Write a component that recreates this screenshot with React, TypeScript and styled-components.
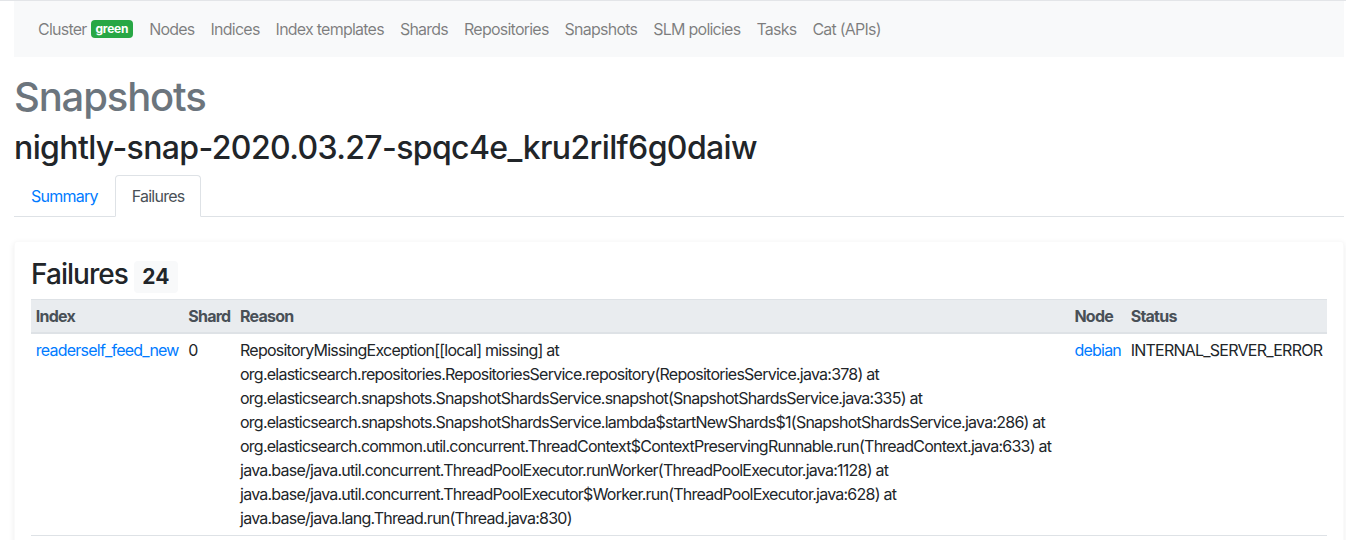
import React from "react";
import styled, { createGlobalStyle } from "styled-components";

const GlobalStyle = createGlobalStyle`
  html, body { margin: 0; padding: 0; background: #fff; }
  body {
    font-family: "Inter", "Liberation Sans", sans-serif;
    font-size: 16px;
    line-height: 1.5;
    color: #212529;
    letter-spacing: -0.76px;
  }
  * { box-sizing: border-box; }
`;

const Page = styled.div`
  border-top: 1px solid #e3e5e8;
  padding: 0 2px 0 14px;
`;

const Navbar = styled.nav`
  display: flex;
  align-items: center;
  background: #f8f9fa;
  padding: 8px 16px;
`;

const NavLink = styled.a`
  display: flex;
  align-items: center;
  padding: 8px;
  color: rgba(0, 0, 0, 0.5);
  text-decoration: none;
  line-height: 24px;
  white-space: nowrap;
`;

const Badge = styled.span<{ $variant: "success" | "light" }>`
  display: inline-block;
  margin-left: ${(p) => (p.$variant === "success" ? "4px" : "6px")};
  padding: 0.25em 0.4em;
  font-size: 75%;
  font-weight: 700;
  line-height: 1;
  letter-spacing: ${(p) => (p.$variant === "success" ? "-0.2px" : "0")};
  border-radius: 0.25rem;
  vertical-align: ${(p) => (p.$variant === "success" ? "baseline" : "middle")};
  color: ${(p) => (p.$variant === "success" ? "#fff" : "#212529")};
  background: ${(p) => (p.$variant === "success" ? "#28a745" : "#f8f9fa")};
`;

const Title = styled.h1`
  margin: 16px 0 8px;
  font-size: 40px;
  font-weight: 500;
  line-height: 1.2;
  letter-spacing: -1.15px;
  color: #6c757d;
`;

const Subtitle = styled.h2`
  margin: 0 0 8px;
  font-size: 32px;
  font-weight: 500;
  line-height: 1.2;
  letter-spacing: -0.62px;
  color: #212529;
`;

const Tabs = styled.ul`
  display: flex;
  list-style: none;
  margin: 0;
  padding: 0;
  border-bottom: 1px solid #dee2e6;
`;

const Tab = styled.a<{ $active?: boolean }>`
  display: block;
  margin-bottom: -1px;
  padding: 8px 16px;
  border-style: solid;
  border-width: 1px;
  border-color: ${(p) => (p.$active ? "#dee2e6 #dee2e6 #fff" : "transparent")};
  border-top-left-radius: 0.25rem;
  border-top-right-radius: 0.25rem;
  background: ${(p) => (p.$active ? "#fff" : "transparent")};
  color: ${(p) => (p.$active ? "#495057" : "#007bff")};
  text-decoration: none;
`;

const Card = styled.section`
  margin-top: 24px;
  padding: 16px;
  background: #fff;
  border-radius: 0.25rem;
  box-shadow: 0 0.125rem 0.4rem rgba(0, 0, 0, 0.08);
  border: 1px solid rgba(0, 0, 0, 0.02);
`;

const CardTitle = styled.h3`
  margin: 0 0 6px;
  font-size: 28px;
  font-weight: 500;
  line-height: 1.2;
  letter-spacing: -0.95px;
`;

const Table = styled.table`
  width: 100%;
  border-collapse: collapse;
`;

const Th = styled.th`
  padding: 4px 4.8px;
  text-align: left;
  vertical-align: bottom;
  font-weight: 700;
  color: #495057;
  background: #e9ecef;
  border-top: 1px solid #dee2e6;
  border-bottom: 2px solid #dee2e6;
  white-space: nowrap;
`;

const Td = styled.td<{ $wrap?: boolean }>`
  padding: 4.8px;
  vertical-align: top;
  border-top: 1px solid #dee2e6;
  border-bottom: 1px solid #dee2e6;
  white-space: ${(p) => (p.$wrap ? "normal" : "nowrap")};
`;

const Link = styled.a`
  color: #007bff;
  text-decoration: none;
`;

const navItems = [
  "Nodes",
  "Indices",
  "Index templates",
  "Shards",
  "Repositories",
  "Snapshots",
  "SLM policies",
  "Tasks",
  "Cat (APIs)",
];

const reason =
  "RepositoryMissingException[[local] missing] at " +
  "org.elasticsearch.repositories.RepositoriesService.repository(RepositoriesService.java:378) at " +
  "org.elasticsearch.snapshots.SnapshotShardsService.snapshot(SnapshotShardsService.java:335) at " +
  "org.elasticsearch.snapshots.SnapshotShardsService.lambda$startNewShards$1(SnapshotShardsService.java:286) at " +
  "org.elasticsearch.common.util.concurrent.ThreadContext$ContextPreservingRunnable.run(ThreadContext.java:633) at " +
  "java.base/java.util.concurrent.ThreadPoolExecutor.runWorker(ThreadPoolExecutor.java:1128) at " +
  "java.base/java.util.concurrent.ThreadPoolExecutor$Worker.run(ThreadPoolExecutor.java:628) at " +
  "java.base/java.lang.Thread.run(Thread.java:830)";

export default function App() {
  return (
    <>
      <GlobalStyle />
      <Page>
        <Navbar>
          <NavLink href="#">
            Cluster <Badge $variant="success">green</Badge>
          </NavLink>
          {navItems.map((item) => (
            <NavLink key={item} href="#">
              {item}
            </NavLink>
          ))}
        </Navbar>

        <Title>Snapshots</Title>
        <Subtitle>nightly-snap-2020.03.27-spqc4e_kru2rilf6g0daiw</Subtitle>

        <Tabs>
          <li>
            <Tab href="#">Summary</Tab>
          </li>
          <li>
            <Tab href="#" $active>
              Failures
            </Tab>
          </li>
        </Tabs>

        <Card>
          <CardTitle>
            Failures<Badge $variant="light">24</Badge>
          </CardTitle>
          <Table>
            <thead>
              <tr>
                <Th>Index</Th>
                <Th>Shard</Th>
                <Th>Reason</Th>
                <Th>Node</Th>
                <Th>Status</Th>
              </tr>
            </thead>
            <tbody>
              <tr>
                <Td>
                  <Link href="#">readerself_feed_new</Link>
                </Td>
                <Td>0</Td>
                <Td $wrap>{reason}</Td>
                <Td>
                  <Link href="#">debian</Link>
                </Td>
                <Td>INTERNAL_SERVER_ERROR</Td>
              </tr>
            </tbody>
          </Table>
        </Card>
      </Page>
    </>
  );
}
